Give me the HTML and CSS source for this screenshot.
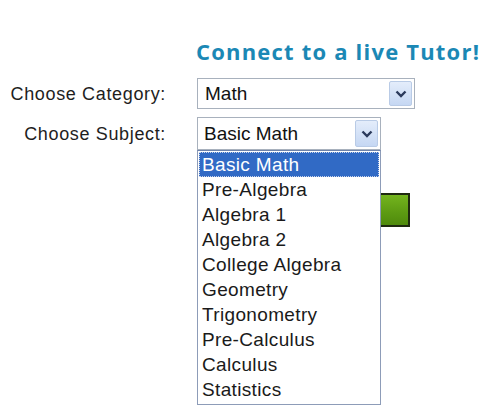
FILE: index.html
```html
<!DOCTYPE html>
<html>
<head>
<meta charset="utf-8">
<link rel="stylesheet" href="styles.css">
</head>
<body>
<div class="page">
  <h1 class="title">Connect to a live Tutor!</h1>
  <div class="form">
    <label class="lbl lbl-cat">Choose Category:</label>
    <div class="select select-cat">
      <span class="value">Math</span>
      <span class="arrow"><svg width="12" height="8" viewBox="0 0 12 8"><path d="M1.5 1.5 L6 6 L10.5 1.5" fill="none" stroke="#2b3a5c" stroke-width="2.4"/></svg></span>
    </div>
    <label class="lbl lbl-sub">Choose Subject:</label>
    <div class="field-sub">
      <div class="select select-sub">
        <span class="value">Basic Math</span>
        <span class="arrow"><svg width="12" height="8" viewBox="0 0 12 8"><path d="M1.5 1.5 L6 6 L10.5 1.5" fill="none" stroke="#2b3a5c" stroke-width="2.4"/></svg></span>
      </div>
      <ul class="listbox">
        <li class="sel">Basic Math</li>
        <li>Pre-Algebra</li>
        <li>Algebra 1</li>
        <li>Algebra 2</li>
        <li>College Algebra</li>
        <li>Geometry</li>
        <li>Trigonometry</li>
        <li>Pre-Calculus</li>
        <li>Calculus</li>
        <li>Statistics</li>
      </ul>
    </div>
    <div class="spacer"></div>
    <div class="btn-row"><button class="go" type="button"></button></div>
  </div>
</div>
</body>
</html>
```

FILE: styles.css
```css
html, body {
  margin: 0;
  padding: 0;
  background: #ffffff;
}
.page {
  width: 502px;
  height: 414px;
  padding-top: 36px;
  box-sizing: border-box;
  font-family: "Liberation Sans", Arial, sans-serif;
}
.title {
  margin: 0 0 0 196px;
  font-family: "Open Sans", sans-serif;
  font-weight: 700;
  font-size: 22px;
  line-height: 30px;
  color: #1b88b5;
  letter-spacing: 1.2px;
  white-space: nowrap;
}
.form {
  margin-top: 12px;
  display: grid;
  grid-template-columns: 166px 218px;
  column-gap: 31px;
  row-gap: 8px;
  align-items: center;
}
.lbl {
  justify-self: end;
  font-size: 18px;
  color: #1e1e1e;
  letter-spacing: 0.65px;
}
.lbl-cat { margin-top: 2px; }
.lbl-sub { margin-top: 2px; }
.select {
  box-sizing: border-box;
  height: 31px;
  border: 1px solid #a8b1bd;
  background: #fff;
  display: flex;
  align-items: center;
  justify-content: space-between;
  padding: 0 2px 0 7px;
  font-size: 19px;
  color: #111;
}
.select-cat {
  width: 218px;
}
.select-sub {
  width: 184px;
  height: 33px;
  padding-left: 6px;
}
.arrow {
  width: 23px;
  height: 25px;
  box-sizing: border-box;
  border: 1px solid #b9cbe6;
  border-radius: 2px;
  background: linear-gradient(#e4edfb, #c5d7f3);
  display: flex;
  align-items: center;
  justify-content: center;
}
.select-sub .arrow {
  height: 27px;
}
.field-sub {
  position: relative;
  width: 184px;
}
.listbox {
  position: absolute;
  left: 0;
  top: 33px;
  width: 184px;
  box-sizing: border-box;
  margin: 0;
  padding: 1px 0 2px 0;
  list-style: none;
  border: 1px solid #8d9cb8;
  border-top-color: #6d82aa;
  background: #fff;
  z-index: 2;
}
.listbox li {
  height: 25px;
  line-height: 25px;
  padding-left: 3px;
  font-size: 19px;
  letter-spacing: 0.35px;
  color: #1a1a1a;
  margin: 0 1px;
}
.listbox li.sel {
  background: #316ac5;
  color: #fff;
  outline: 1px dotted #c8d3ea;
  outline-offset: -1px;
}
.btn-row {
  display: flex;
  justify-content: flex-end;
  padding-right: 5px;
  margin-top: 35px;
}
.go {
  width: 80px;
  height: 34px;
  border: 2px solid #1f2a10;
  background: linear-gradient(#74b51e, #5c9a12 60%, #4f8a0c);
  padding: 0;
}
```
